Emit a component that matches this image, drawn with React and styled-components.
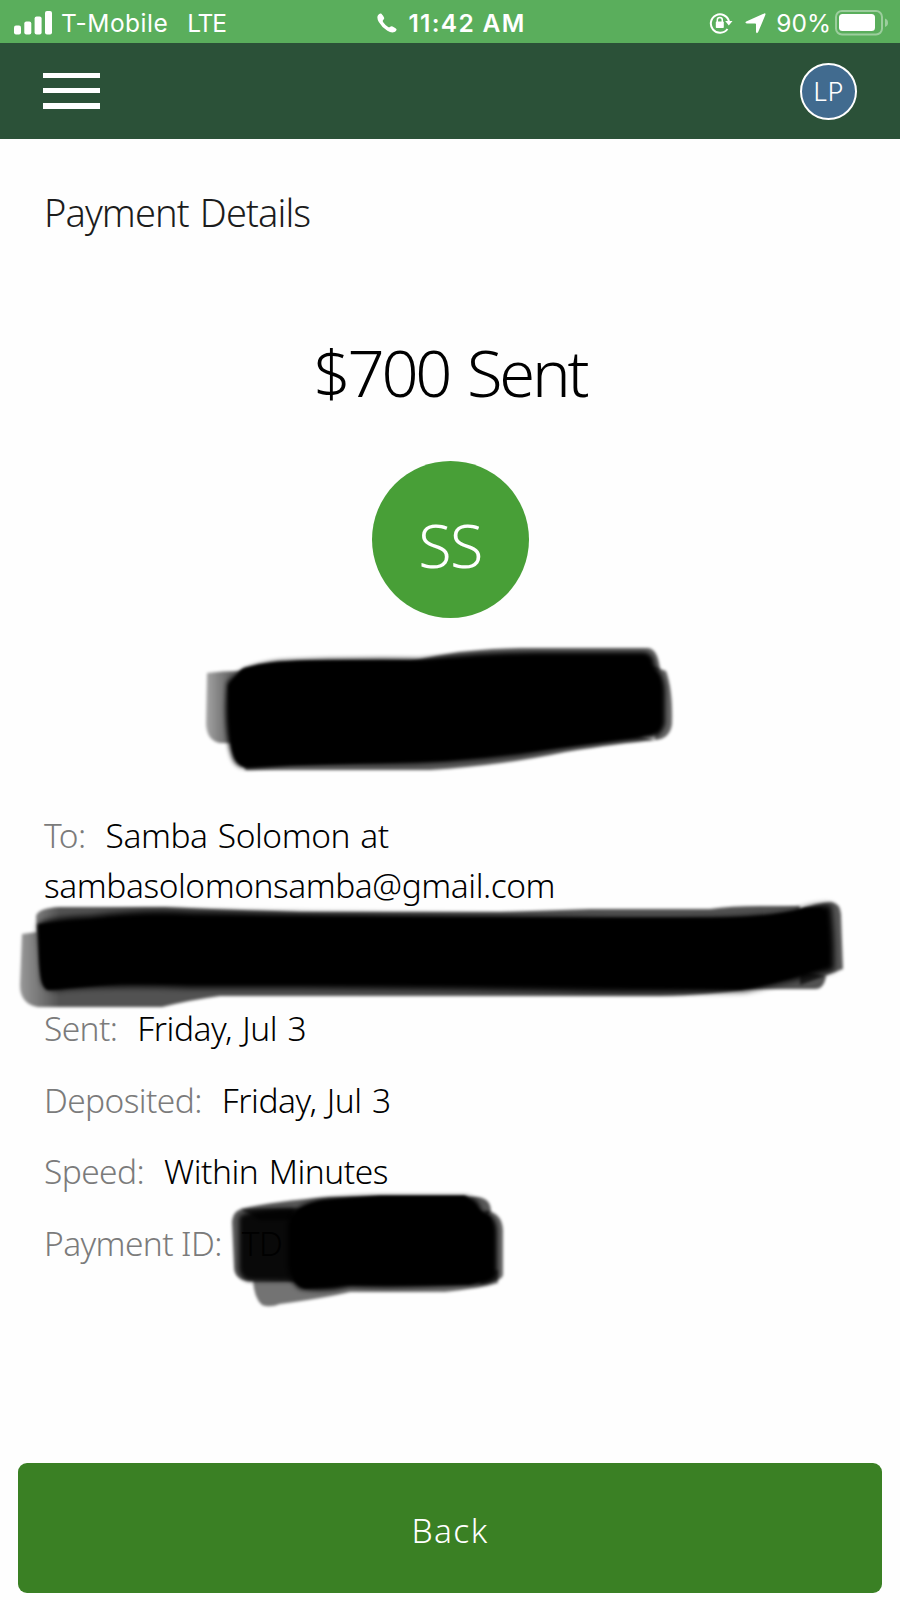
import styled, { createGlobalStyle } from 'styled-components';

const GlobalStyle = createGlobalStyle`
    * { box-sizing: border-box; }
    body {
        margin: 0;
        background: #fefefe;
        font-family: 'Noto Sans', 'Open Sans', sans-serif;
        font-weight: 330;
    }
`

const Screen = styled.div`
    display: flex;
    flex-direction: column;
    width: 900px;
    height: 1600px;
    overflow: hidden;
`

const StatusBar = styled.div`
    display: grid;
    grid-template-columns: 1fr auto 1fr;
    align-items: center;
    height: 43px;
    padding: 3px 11px 0 14px;
    background: #5aae5c;
    color: #fff;
    font-family: Inter, 'Liberation Sans', sans-serif;
    font-size: 24.5px;
    font-weight: 400;
    line-height: 40px;
    svg { display: block; }
`

const StatusGroup = styled.div`
    display: flex;
    align-items: center;
    justify-content: ${props => props.$end ? 'flex-end' : 'flex-start'};
`

const StatusText = styled.span`
    margin-left: ${props => props.$gap || 0}px;
    letter-spacing: ${props => props.$spacing || 0}px;
    font-weight: ${props => props.$bold ? 580 : 400};
    white-space: nowrap;
`

const Header = styled.header`
    display: flex;
    align-items: center;
    justify-content: space-between;
    height: 96px;
    padding: 0 43px;
    background: #2b5138;
`

const MenuButton = styled.button`
    display: flex;
    flex-direction: column;
    justify-content: space-between;
    width: 57px;
    height: 37px;
    padding: 0 0 1px;
    border: 0;
    background: none;
`

const MenuLine = styled.span`
    height: 5.5px;
    background: #fff;
`

const UserBadge = styled.div`
    width: 57px;
    height: 57px;
    border: 2px solid #fff;
    border-radius: 50%;
    background: #416b8f;
    color: #fff;
    font-family: Inter, sans-serif;
    font-size: 25px;
    font-weight: 350;
    line-height: 54px;
    text-align: center;
`

const Main = styled.main`
    display: flex;
    flex-direction: column;
    flex: 1;
    padding-top: 48px;
`

const Title = styled.h1`
    margin: 0 44px;
    color: #1c1c1c;
    font-size: 38px;
    font-weight: inherit;
    line-height: 50px;
    letter-spacing: -0.9px;
    word-spacing: 2px;
`

const Amount = styled.h2`
    margin: 95px 0 49px;
    color: #000;
    font-size: 65px;
    font-weight: inherit;
    line-height: 80px;
    letter-spacing: -3.2px;
    word-spacing: 4px;
    text-align: center;
`

const Recipient = styled.div`
    align-self: center;
    width: 157px;
    height: 157px;
    padding-top: 5px;
    border-radius: 50%;
    background: #489f37;
    color: #fff;
    font-size: 61px;
    line-height: 157px;
    letter-spacing: -1.5px;
    text-align: center;
`

const Confirmation = styled.div`
    height: 140px;
    margin: 22px 0 30px 190px;
    svg { display: block; }
`

const Details = styled.dl`
    display: flex;
    flex-direction: column;
    gap: 21.6px;
    margin: 0 44px;
    font-size: 33.5px;
    line-height: 50px;
`

const Row = styled.div`
    position: relative;
    min-height: 50px;
`

const Label = styled.dt`
    display: inline;
    margin-right: 20px;
    color: #7b7b7b;
    letter-spacing: -0.6px;
`

const Value = styled.dd`
    display: inline;
    margin: 0;
    color: #000;
    letter-spacing: -0.45px;
    word-spacing: 2px;
`

const Scribble = styled.svg`
    position: absolute;
    left: ${props => props.$left}px;
    top: ${props => props.$top}px;
`

const BackButton = styled.button`
    height: 130px;
    margin: auto 18px 7px;
    padding: 3px 0 0;
    border: 0;
    border-radius: 9px;
    background: #3a8024;
    color: #fff;
    font-family: inherit;
    font-size: 33.5px;
    font-weight: 300;
    letter-spacing: 1.4px;
`

const SignalIcon = () => (
    <svg width="38" height="24" viewBox="0 0 38 24" fill="#fff">
        <rect x="0" y="14.5" width="7" height="9" rx="2" />
        <rect x="10.3" y="10.5" width="7" height="13" rx="2" />
        <rect x="20.6" y="5.5" width="7" height="18" rx="2" />
        <rect x="31" y="0" width="7" height="23.5" rx="2" />
    </svg>
)

const PhoneIcon = () => (
    <svg width="20" height="20" viewBox="0 0 20 20" fill="#fff">
        <path d="M1 2.2 Q2.2 .3 3.8 .5 Q5 .8 7 4.5 Q7.7 5.8 6.2 7 Q5.2 7.9 6.2 9.2 Q8.2 12 10.8 13.8 Q12.2 14.8 13.2 13.8 Q14.2 12.7 15.6 13.4 Q19.5 15.4 19.6 16.5 Q19.4 18.2 17.6 19 Q14.5 20.4 10.4 17.8 Q4.8 14.3 1.8 9 Q-.6 4.8 1 2.2Z" />
    </svg>
)

const RotationLockIcon = () => (
    <svg width="24" height="22" viewBox="0 0 24 22" fill="none" stroke="#fff">
        <path d="M18.5 17 A9.2 9.2 0 1 1 20 9.5" strokeWidth="2" />
        <path d="M16.2 9 H23.5 L19.8 13.5Z" fill="#fff" stroke="none" />
        <rect x="6.8" y="9.6" width="8" height="6.4" rx=".8" fill="#fff" stroke="none" />
        <path d="M8.3 10 V8 A2.5 2.5 0 0 1 13.3 8 V10" strokeWidth="1.5" />
    </svg>
)

const LocationIcon = () => (
    <svg width="21" height="21" viewBox="0 0 21 21" fill="#fff">
        <path d="M19.2 .4 Q20.9 0 20.4 1.8 L13.3 18.8 Q11.8 21.4 11 19 V11.2 Q11 10.4 10.2 10.4 H1.8 Q-.6 9.9 1.2 8.5Z" />
    </svg>
)

const BatteryIcon = () => (
    <svg width="54" height="26" viewBox="0 0 54 26">
        <rect x="1" y="1" width="46" height="23.5" rx="6" fill="none" stroke="#fff" strokeOpacity=".4" strokeWidth="2" />
        <rect x="4" y="4" width="36" height="17" rx="3.5" fill="#fff" />
        <path d="M50 8.5 Q53 9.5 53 12.8 Q53 16 50 17Z" fill="#fff" fillOpacity=".4" />
    </svg>
)

const BlurFilter = ({ id, amount }) => (
    <filter id={id} x="-10%" y="-20%" width="120%" height="140%">
        <feGaussianBlur stdDeviation={amount} />
    </filter>
)

const ConfirmationMark = () => (
    <svg width="500" height="140" viewBox="190 640 500 140">
        <BlurFilter id="soft" amount="1.8" />
        <BlurFilter id="softer" amount="2.6" />
        <linearGradient id="smear" x1="0" x2="1" y1="0" y2="0">
            <stop offset="0" stopOpacity=".35" />
            <stop offset=".6" stopOpacity=".6" />
        </linearGradient>
        <g filter="url(#soft)">
            <path fill="url(#smear)" d="M207 673 Q220 671 245 671 L235 743 H220 Q207 741 206 724Z" />
            <path opacity=".6" d="M410 662 Q465 648 520 648 H648 Q658 649 660 670 H640Z" />
            <path opacity=".6" d="M650 666 L666 671 Q673 690 672 724 Q670 739 655 740Z" />
            <path opacity=".65" d="M245 755 V770 H430 Q505 765 565 752 Q620 743 655 740 L620 730Z" />
        </g>
        <path filter="url(#softer)" d="M227 683 Q240 665 280 661 Q340 658 420 659 Q480 652 535 652 H645 Q654 654 655 667 Q664 674 665 690 V724 Q661 737 650 738 Q590 743 520 755 Q450 764 380 764 H290 L250 768 Q236 769 232 757 Q223 728 227 683Z" />
        <path filter="url(#soft)" d="M242 669 Q260 662 310 661 H640 Q652 666 658 680 V728 L640 736 Q520 753 440 760 L245 767 Q235 764 232 745 L229 686Z" />
    </svg>
)

const AccountMark = () => (
    <Scribble $left={-34} $top={-41.6} width="850" height="130" viewBox="10 890 850 130">
        <BlurFilter id="edge" amount="1.8" />
        <BlurFilter id="fade" amount="3" />
        <linearGradient id="drag" gradientUnits="userSpaceOnUse" x1="20" x2="60" y1="0" y2="0">
            <stop offset="0" stopOpacity=".4" />
            <stop offset="1" stopOpacity=".68" />
        </linearGradient>
        <g filter="url(#edge)">
            <path fill="url(#drag)" d="M36 916 Q38 908 60 907 H165 Q230 910 300 912 H500 L590 909 H710 Q730 906 760 906 H800 V970 L826 976 Q824 989 815 989 H745 Q710 995 660 996 H220 Q190 1000 162 1007 H38 Q20 1004 20 985 L22 934 L37 932Z" />
            <path opacity=".65" d="M800 910 Q817 903 831 902 Q840 903 841 914 L843 969 Q830 974 800 985Z" />
        </g>
        <path filter="url(#fade)" d="M38 925 Q42 918 90 916 Q145 909 190 912 Q300 914 500 916 Q630 919 690 918 Q760 918 795 911 Q820 903 831 905 Q835 940 834 970 Q790 982 745 991 Q640 993 560 991 Q450 989 300 988 H190 Q120 985 65 989 Q45 993 42 981Z" />
        <path filter="url(#edge)" d="M38 924 Q50 924 120 918 H700 Q770 919 805 908 L822 908 V966 Q780 984 740 989 Q600 984 500 983 H120 L48 990 Q40 989 39 955Z" />
    </Scribble>
)

const PaymentIdMark = () => (
    <Scribble $left={176} $top={-38} width="300" height="140" viewBox="220 1180 300 140">
        <BlurFilter id="rim" amount="1.8" />
        <BlurFilter id="shade" amount="2.5" />
        <g filter="url(#rim)">
            <path opacity=".55" d="M253 1280 Q254 1298 262 1305 Q270 1308 280 1304 Q325 1298 350 1292 H445 Q480 1288 498 1283 V1270Z" />
            <path opacity=".65" d="M240 1209 Q275 1201 330 1197 H470 Q491 1195 491 1212 L480 1220 H260Z" />
            <path opacity=".6" d="M485 1211 Q502 1212 503 1230 V1275 Q501 1282 480 1284Z" />
            <path opacity=".65" d="M232 1222 Q233 1209 245 1209 H310 V1281 H248 Q234 1279 234 1267Z" />
        </g>
        <path opacity=".9" filter="url(#shade)" d="M239 1217 Q246 1209 295 1208 V1281 H250 Q241 1280 239 1270Z" />
        <path filter="url(#shade)" d="M288 1225 Q290 1205 320 1200 Q350 1196 390 1196 H465 Q479 1198 481 1211 Q496 1214 497 1230 V1275 Q494 1283 475 1285 Q400 1289 350 1287 Q323 1293 300 1289 Q289 1282 288 1265Z" />
        <path filter="url(#rim)" d="M290 1225 Q294 1207 322 1201 L380 1196 H465 L480 1211 L490 1218 V1276 L470 1284 H340 L305 1288 Q294 1285 291 1270Z" />
    </Scribble>
)

const App = () => {
    return (
        <Screen>
            <GlobalStyle />
            <StatusBar>
                <StatusGroup>
                    <SignalIcon />
                    <StatusText $gap={9} $spacing={0.5}>T-Mobile</StatusText>
                    <StatusText $gap={19} $spacing={-1.2}>LTE</StatusText>
                </StatusGroup>
                <StatusGroup>
                    <PhoneIcon />
                    <StatusText $gap={11} $spacing={1.3} $bold>11:42 AM</StatusText>
                </StatusGroup>
                <StatusGroup $end>
                    <RotationLockIcon />
                    <StatusText $gap={12}><LocationIcon /></StatusText>
                    <StatusText $gap={10}>90%</StatusText>
                    <StatusText $gap={4}><BatteryIcon /></StatusText>
                </StatusGroup>
            </StatusBar>

            <Header>
                <MenuButton aria-label="Menu">
                    <MenuLine />
                    <MenuLine />
                    <MenuLine />
                </MenuButton>
                <UserBadge>LP</UserBadge>
            </Header>

            <Main>
                <Title>Payment Details</Title>
                <Amount>$700 Sent</Amount>
                <Recipient>SS</Recipient>
                <Confirmation><ConfirmationMark /></Confirmation>
                <Details>
                    <Row>
                        <Label>To:</Label>
                        <Value>Samba Solomon at<br />sambasolomonsamba@gmail.com</Value>
                    </Row>
                    <Row><AccountMark /></Row>
                    <Row>
                        <Label>Sent:</Label>
                        <Value>Friday, Jul 3</Value>
                    </Row>
                    <Row>
                        <Label>Deposited:</Label>
                        <Value>Friday, Jul 3</Value>
                    </Row>
                    <Row>
                        <Label>Speed:</Label>
                        <Value>Within Minutes</Value>
                    </Row>
                    <Row>
                        <Label>Payment ID:</Label>
                        <Value>TD</Value>
                        <PaymentIdMark />
                    </Row>
                </Details>
                <BackButton>Back</BackButton>
            </Main>
        </Screen>
    );
};

export default App;
